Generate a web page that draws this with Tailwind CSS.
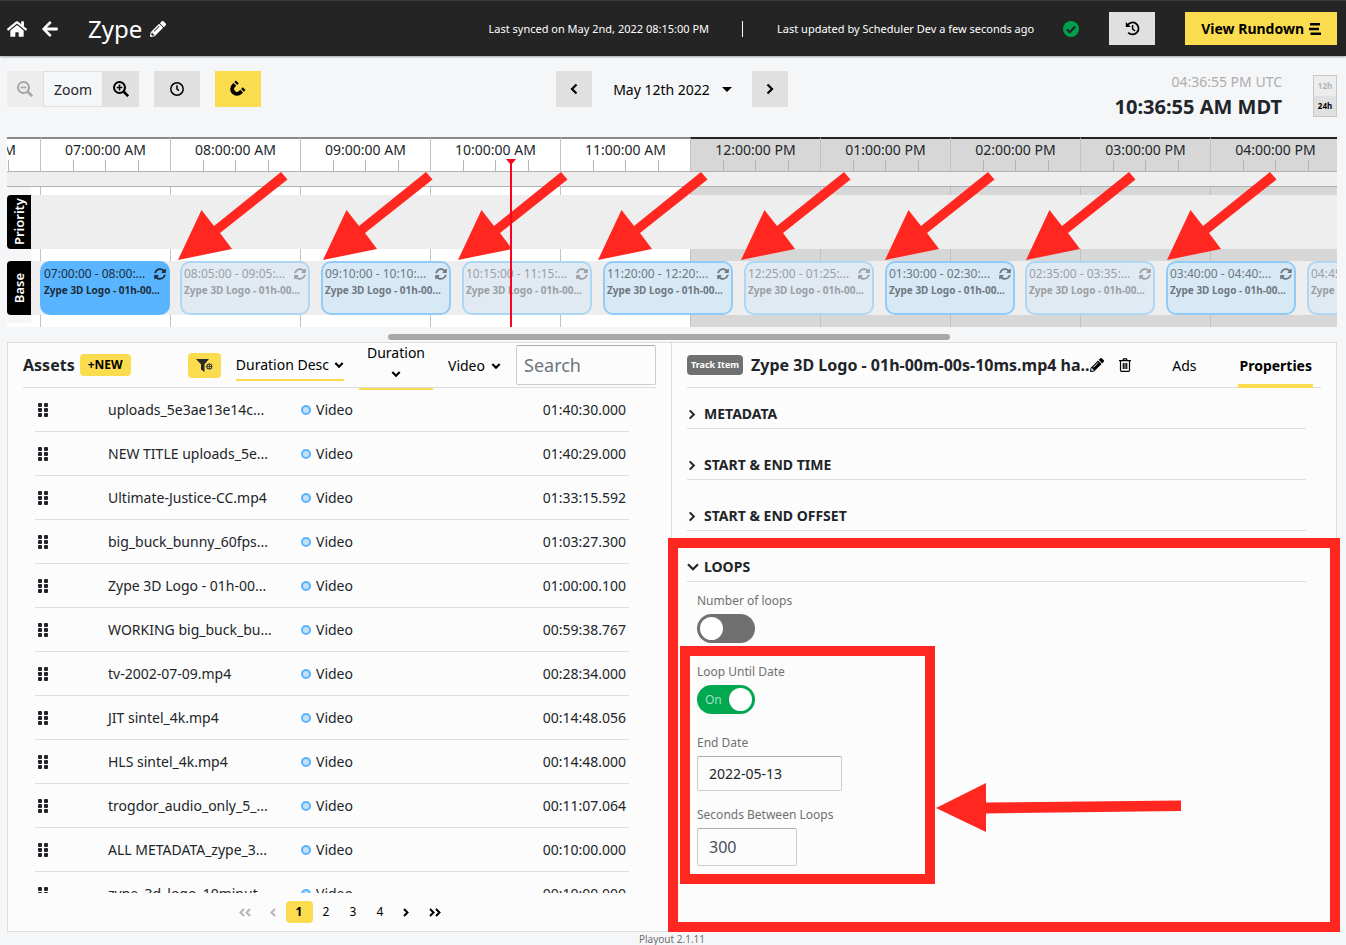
<!DOCTYPE html>
<html lang="en">
<head>
<meta charset="utf-8">
<title>Zype Playout</title>
<script src="https://cdn.jsdelivr.net/npm/@tailwindcss/browser@4"></script>
</head>
<body class="relative flex min-h-screen flex-col overflow-x-hidden bg-[#f5f6f8] font-['Noto_Sans',sans-serif] text-sm text-[#212529]">

<svg class="hidden" aria-hidden="true">
  <symbol id="home" viewBox="0 0 576 512"><path d="M280.37 148.26L96 300.11V464a16 16 0 0 0 16 16l112.06-.29a16 16 0 0 0 15.92-16V368a16 16 0 0 1 16-16h64a16 16 0 0 1 16 16v95.64a16 16 0 0 0 16 16.05L464 480a16 16 0 0 0 16-16V300L295.67 148.26a12.19 12.19 0 0 0-15.3 0zM571.6 251.47L488 182.56V44.05a12 12 0 0 0-12-12h-56a12 12 0 0 0-12 12v72.61L318.47 43a48 48 0 0 0-61 0L4.34 251.47a12 12 0 0 0-1.6 16.9l25.5 31A12 12 0 0 0 45.15 301l235.22-193.74a12.19 12.19 0 0 1 15.3 0L530.9 301a12 12 0 0 0 16.9-1.6l25.5-31a12 12 0 0 0-1.7-16.93z"/></symbol>
  <symbol id="back" viewBox="0 0 448 512"><path d="M257.5 445.1l-22.2 22.2c-9.4 9.4-24.6 9.4-33.9 0L7 273c-9.4-9.4-9.4-24.6 0-33.9L201.4 44.7c9.4-9.4 24.6-9.4 33.9 0l22.2 22.2c9.5 9.5 9.3 25-.4 34.3L136.6 216H424c13.3 0 24 10.7 24 24v32c0 13.3-10.7 24-24 24H136.6l120.5 114.8c9.8 9.3 10 24.8.4 34.3z"/></symbol>
  <symbol id="pencil" viewBox="0 0 512 512"><path d="M497.9 142.1l-46.1 46.1c-4.7 4.7-12.3 4.7-17 0l-111-111c-4.7-4.7-4.7-12.3 0-17l46.1-46.1c18.7-18.7 49.1-18.7 67.9 0l60.1 60.1c18.8 18.7 18.8 49.1 0 67.9zM284.2 99.8L21.6 362.4.4 483.9c-2.9 16.4 11.4 30.6 27.8 27.8l121.5-21.3 262.6-262.6c4.7-4.7 4.7-12.3 0-17l-111-111c-4.8-4.7-12.4-4.7-17.1 0zM124.1 339.9c-5.5-5.5-5.5-14.3 0-19.8l154-154c5.5-5.5 14.3-5.5 19.8 0s5.5 14.3 0 19.8l-154 154c-5.5 5.5-14.3 5.5-19.8 0zM88 424h48v36.3l-64.5 11.3-31.1-31.1L51.7 376H88v48z"/></symbol>
  <symbol id="sync" viewBox="0 0 512 512"><path d="M370.72 133.28C339.458 104.008 298.888 87.962 255.848 88c-77.458.068-144.328 53.178-162.791 126.85-1.344 5.363-6.122 9.15-11.651 9.15H24.103c-7.498 0-13.194-6.807-11.807-14.176C33.933 94.924 134.813 8 256 8c66.448 0 126.791 26.136 171.315 68.685L463.03 40.97C478.149 25.851 504 36.559 504 57.941V192c0 13.255-10.745 24-24 24H345.941c-21.382 0-32.09-25.851-16.971-40.971l41.75-41.749zM32 296h134.059c21.382 0 32.09 25.851 16.971 40.971l-41.75 41.75c31.262 29.273 71.835 45.319 114.876 45.28 77.418-.07 144.315-53.144 162.787-126.849 1.344-5.363 6.122-9.15 11.651-9.15h57.304c7.498 0 13.194 6.807 11.807 14.176C478.067 417.076 377.187 504 256 504c-66.448 0-126.791-26.136-171.315-68.685L48.97 471.03C33.851 486.149 8 475.441 8 454.059V320c0-13.255 10.745-24 24-24z"/></symbol>
  <symbol id="chev" viewBox="0 0 10 10"><path d="M1.3 3 5 6.700 8.700 3" fill="none" stroke="currentColor" stroke-width="2.200"/></symbol>
  <symbol id="angle" viewBox="0 0 8 12"><path d="M1.500 1.500 6 6 1.500 10.500" fill="none" stroke="currentColor" stroke-width="2.200"/></symbol>
  <symbol id="angle-bold" viewBox="0 0 6 9"><path d="M1 1 4.500 4.500 1 8" fill="none" stroke="currentColor" stroke-width="2"/></symbol>
</svg>

<header class="flex h-14 shrink-0 items-center border-t border-[#36373f] bg-[#242424] pr-[9px] pl-[7px] text-white shadow-[0_1px_2px_rgba(0,0,0,0.35)]">
  <a href="#" aria-label="Home"><svg class="h-[18px] w-5 fill-current"><use href="#home"/></svg></a>
  <a href="#" aria-label="Back" class="ml-[15px]"><svg class="h-[18px] w-4 fill-current"><use href="#back"/></svg></a>
  <h1 class="ml-[30px] text-2xl">Zype</h1>
  <button aria-label="Rename channel" class="ml-2"><svg class="size-4 fill-current"><use href="#pencil"/></svg></button>
  <div class="ml-auto flex items-center text-[11px]">
    <span>Last synced on May 2nd, 2022 08:15:00 PM</span>
    <span class="ml-[33px] h-4 w-px bg-white"></span>
    <span class="ml-[34px]">Last updated by Scheduler Dev a few seconds ago</span>
    <svg class="ml-[29px] size-4" viewBox="0 0 16 16"><circle cx="8" cy="8" r="8" fill="#009f4b"/><path d="M3.800 8.200 6.800 11.200 12.200 5.600" fill="none" stroke="#242424" stroke-width="2.200"/></svg>
  </div>
  <button aria-label="History" class="ml-[30px] flex h-[33px] w-[46px] items-center justify-center bg-[#e0e0e0] text-black">
    <svg class="size-[15px]" viewBox="0 0 15 15" fill="none" stroke="currentColor" stroke-width="1.800"><path d="M2.500 4.200A6 6 0 1 1 3.200 11.600"/><path d="M.8 1v5h5z" fill="currentColor" stroke="none"/><path d="M7.600 4v4l2.400 1.900" stroke-width="1.500"/></svg>
  </button>
  <button class="ml-[30px] flex h-[33px] items-center gap-[5px] bg-[#fcdc4f] px-4 font-bold text-black">View Rundown
    <svg class="h-3 w-3" viewBox="0 0 12 12"><path d="M1 0h10v2.400H1zM0 4.800h10v2.400H0zM1.500 9.600H12V12H1.500z"/></svg>
  </button>
</header>

<section aria-label="Toolbar" class="grid h-[81px] shrink-0 grid-cols-[1fr_auto_1fr] items-start pr-[9px] pl-[7px] pt-[15px] text-black">
  <div class="flex h-9">
    <button aria-label="Zoom out" disabled class="flex w-9 items-center justify-center bg-[#ededee] text-[#a6a6a8]">
      <svg class="size-4" viewBox="0 0 16 16" fill="none" stroke="currentColor" stroke-width="2"><circle cx="6.500" cy="6.500" r="5.500"/><path d="m10.500 10.500 4.700 4.700" stroke-width="2.600"/><path d="M3.600 6.500h5.800" stroke-width="1.600"/></svg>
    </button>
    <span class="flex w-[60px] items-center justify-center border border-[#e0e0e0] pt-[2px] text-[#212529]">Zoom</span>
    <button aria-label="Zoom in" class="flex w-9 items-center justify-center bg-[#e0e0e0]">
      <svg class="size-4" viewBox="0 0 16 16" fill="none" stroke="currentColor" stroke-width="2"><circle cx="6.500" cy="6.500" r="5.500"/><path d="m10.500 10.500 4.700 4.700" stroke-width="2.600"/><path d="M3.600 6.500h5.800M6.500 3.600v5.800" stroke-width="1.600"/></svg>
    </button>
    <button aria-label="Go to now" class="ml-[15px] flex w-[46px] items-center justify-center bg-[#e0e0e0]">
      <svg class="size-[14px]" viewBox="0 0 14 14" fill="none" stroke="currentColor" stroke-width="1.500"><circle cx="7" cy="7" r="6.200"/><path d="M7 3.200V7.200L9 8.600"/></svg>
    </button>
    <button aria-label="Snap" class="ml-[15px] flex w-[46px] items-center justify-center bg-[#fcdc4f]">
      <svg class="mb-[2px] size-4" viewBox="0 0 16 16" fill="none" stroke="currentColor" stroke-width="4"><path d="M4.800 4.400 3.600 5.600A4.800 4.800 0 0 0 10.400 12.400L11.600 11.200M5.700 3.500 7.300 1.900M12.500 10.300 14.100 8.700"/></svg>
    </button>
  </div>
  <div class="flex h-9 items-center">
    <button aria-label="Previous day" class="flex size-9 items-center justify-center bg-[#e0e0e0]"><svg class="h-3 w-2 rotate-180"><use href="#angle"/></svg></button>
    <button class="mr-5 ml-[21px] flex items-center gap-3 pt-[2px]" aria-haspopup="dialog">May 12th 2022 <svg class="mb-[2px] h-[5px] w-[10px]" viewBox="0 0 10 5"><path d="M0 0h10L5 5z"/></svg></button>
    <button aria-label="Next day" class="flex size-9 items-center justify-center bg-[#e0e0e0]"><svg class="h-3 w-2"><use href="#angle"/></svg></button>
  </div>
  <div class="flex justify-end gap-[31px]">
    <div class="text-right">
      <div class="leading-[22px] text-[#adadad]">04:36:55 PM UTC</div>
      <div class="text-xl leading-7 font-bold text-[#212529]">10:36:55 AM MDT</div>
    </div>
    <div class="mt-1 flex h-[42px] w-6 flex-col border border-[#c8c8c8] text-[8px] font-bold">
      <button class="flex-1 bg-[#ededee] text-[#b3b3b3]">12h</button>
      <button class="flex-1 bg-[#e0e0e0]">24h</button>
    </div>
  </div>
</section>

<section aria-label="Timeline" class="relative mr-[9px] ml-[7px] h-[190px] shrink-0">
  <div id="hours" class="absolute inset-0 flex overflow-hidden"></div>
  <div class="absolute inset-x-0 top-[34px] h-4 border-y border-[#b0b0b0] bg-[#eee]"></div>
  <div class="absolute top-[50px] left-0 h-[136px] w-6 bg-[#f5f6f8]"></div>
  <div class="absolute inset-x-0 top-[58px] flex h-[54px] bg-[#eee]">
    <div class="flex w-6 items-center justify-center rounded-l bg-black text-[13px] font-semibold text-white"><span class="rotate-180 [writing-mode:vertical-rl]">Priority</span></div>
  </div>
  <div class="absolute inset-x-0 top-[124px] flex h-[54px] overflow-hidden bg-[#eee]">
    <div class="flex w-6 items-center justify-center rounded-l bg-black text-[13px] font-semibold text-white"><span class="rotate-180 [writing-mode:vertical-rl]">Base</span></div>
    <div id="clips" class="relative ml-[9px] flex-1"></div>
  </div>
  <svg id="arrows" class="pointer-events-none absolute top-[34px] left-0 h-[92px] w-full overflow-visible fill-[#ff2720]" aria-hidden="true">
    <symbol id="arrow" viewBox="0 0 110 90"><path d="M0 89 23.500 39 36 55 103 1 109.500 8.500 42 62 54 78z"/></symbol>
  </svg>
  <div class="absolute top-[22px] left-[499px] flex h-[168px] w-[10px] flex-col items-center">
    <svg class="h-[6px] w-[10px] shrink-0 fill-[#ff0020]" viewBox="0 0 10 6"><path d="M0 0h10L5 6z"/></svg>
    <div class="-mt-1 w-[2px] flex-1 bg-[#ff0020]"></div>
  </div>
</section>
<div class="mr-[9px] ml-[7px] flex h-[15px] shrink-0 items-end pb-[2px]"><div class="ml-[381px] h-[6px] w-[562px] rounded-full bg-[#a8a8a8]"></div></div>

<main class="mr-[9px] ml-[7px] grid flex-1 grid-cols-2 border border-[#ddd] bg-[#fcfcfc]">
  <section aria-label="Assets" class="flex flex-col pr-px">
    <div class="mx-[15px] flex h-[45px] items-center border-b border-[#ddd] text-black">
      <h2 class="text-base font-bold text-[#212529]">Assets</h2>
      <button class="ml-[5px] h-[22px] rounded bg-[#fcdc4f] px-2 text-xs font-bold">+NEW</button>
      <button aria-label="Filters" class="ml-auto flex h-[25px] w-[33px] items-center justify-center rounded bg-[#fcdc4f]">
        <svg class="h-[13px] w-[17px]" viewBox="0 0 17 13" fill="#2a2a2a"><path d="M0 0h13L8.500 5.200V13L5 10.500V5.200z"/><circle cx="13.300" cy="7.500" r="3.600" stroke="#fcdc4f" stroke-width="1"/><circle cx="13.300" cy="7.500" r="2" fill="#fcdc4f"/><path d="M11 7.500h4.600M13.300 5.200v4.600" stroke="#2a2a2a" stroke-width=".8"/></svg>
      </button>
      <label class="ml-[15px] flex h-[31px] items-center gap-[5px] border-b-2 border-[#fcdc4f] pt-[2px]"><select aria-label="Sort" class="appearance-none [field-sizing:content]"><option>Duration Desc</option></select><svg class="size-[10px]"><use href="#chev"/></svg></label>
      <label class="-mb-px ml-[15px] flex h-[48px] w-[74px] flex-col items-center border-b-2 border-[#fcdc4f] pt-px"><select aria-label="Filter by duration" class="appearance-none [field-sizing:content]"><option>Duration</option></select><svg class="mt-[6px] size-[10px]"><use href="#chev"/></svg></label>
      <label class="ml-[15px] flex items-center gap-[6px] pt-[2px]"><select aria-label="Asset type" class="appearance-none [field-sizing:content]"><option>Video</option></select><svg class="size-[10px]"><use href="#chev"/></svg></label>
      <input type="search" aria-label="Search assets" placeholder="Search" class="ml-[15px] h-10 w-[140px] rounded-[2px] border border-[#ccc] border-t-[#aaa] bg-transparent px-[7px] text-lg placeholder:text-[#6c757d]">
    </div>
    <div class="mr-[42px] ml-[27px] h-[505px] overflow-hidden">
      <table class="w-full table-fixed border-separate border-spacing-0">
        <colgroup><col class="w-[73px]"><col class="w-[193px]"><col><col class="w-[120px]"></colgroup>
        <tbody id="assets"></tbody>
      </table>
    </div>
    <nav aria-label="Pages" class="mt-2 flex h-[22px] items-center justify-center text-xs text-black">
      <button aria-label="First page" disabled class="mr-[19px] flex text-[#b5b5b5]"><svg class="h-[9px] w-[6px] rotate-180"><use href="#angle-bold"/></svg><svg class="h-[9px] w-[6px] rotate-180"><use href="#angle-bold"/></svg></button>
      <button aria-label="Previous page" disabled class="mr-[10px] text-[#b5b5b5]"><svg class="h-[9px] w-[6px] rotate-180"><use href="#angle-bold"/></svg></button>
      <button aria-current="page" class="h-[22px] w-[27px] rounded bg-[#fcdc4f] font-bold">1</button>
      <button class="w-[27px]">2</button>
      <button class="w-[27px]">3</button>
      <button class="w-[27px]">4</button>
      <button aria-label="Next page" class="ml-[9px]"><svg class="h-[9px] w-[6px]"><use href="#angle-bold"/></svg></button>
      <button aria-label="Last page" class="ml-5 flex"><svg class="h-[9px] w-[6px]"><use href="#angle-bold"/></svg><svg class="h-[9px] w-[6px]"><use href="#angle-bold"/></svg></button>
    </nav>
  </section>

  <section aria-label="Track item" class="-ml-px flex min-w-0 flex-col border-l border-[#ddd] pl-[15px]">
    <div class="mr-[15px] flex h-[45px] items-center border-b border-[#ddd]">
      <span class="flex h-5 items-center rounded bg-[#707070] px-1 text-[9px] font-bold text-white">Track Item</span>
      <h2 class="ml-2 text-base font-bold whitespace-nowrap">Zype 3D Logo - 01h-00m-00s-10ms.mp4 ha..</h2>
      <button aria-label="Edit title"><svg class="size-[14px] fill-black"><use href="#pencil"/></svg></button>
      <button aria-label="Delete" class="ml-[15px]"><svg class="h-[14px] w-3" viewBox="0 0 12 14" fill="none" stroke="#000" stroke-width="1.200"><path d="M0 2.700h12M3.800 2.700 4.500.8h3l.7 1.900M1.500 3v9.200q0 1.100 1 1.100h7q1 0 1-1.100V3M4.300 5v6M6 5v6M7.700 5v6"/></svg></button>
      <nav class="ml-auto flex h-full items-center text-black">
        <a href="#" class="mr-[42px] pt-[2px]">Ads</a>
        <a href="#" aria-current="page" class="mr-2 -mb-px flex h-[45px] items-center border-b-4 border-[#fcdc4f] px-px pt-1 font-bold">Properties</a>
      </nav>
    </div>
    <div class="mr-[30px] font-bold">
      <button class="flex h-[41px] w-full items-end gap-2 border-b border-[#ddd] px-px pb-1"><svg class="mb-1 h-[11px] w-2"><use href="#angle"/></svg>METADATA</button>
      <button class="flex h-[51px] w-full items-end gap-2 border-b border-[#ddd] px-px pb-1"><svg class="mb-1 h-[11px] w-2"><use href="#angle"/></svg>START &amp; END TIME</button>
      <button class="flex h-[51px] w-full items-end gap-2 border-b border-[#ddd] px-px pb-1"><svg class="mb-1 h-[11px] w-2"><use href="#angle"/></svg>START &amp; END OFFSET</button>
    </div>
    <div class="relative flex-1 pr-[30px]">
      <div class="pointer-events-none absolute -right-1 -bottom-px top-[7px] -left-[19px] border-[10px] border-[#ff2720]"></div>
      <button class="flex h-[51px] w-full items-end gap-[5px] border-b border-[#ddd] pb-1 font-bold"><svg class="mb-[6px] h-2 w-3" viewBox="0 0 12 8" fill="none" stroke="currentColor" stroke-width="2.200"><path d="M1 1.200 6 6.200 11 1.200"/></svg>LOOPS</button>
      <div class="relative pt-[10px] pl-[10px] text-xs text-[#707070]">
        <div class="pointer-events-none absolute top-16 -left-[7px] h-[238px] w-[255px] border-[10px] border-[#ff2720]"></div>
        <svg class="pointer-events-none absolute top-[201px] left-[249px] h-[50px] w-[246px] fill-[#ff2720]" viewBox="0 0 246 50" aria-hidden="true"><path d="M0 25 50 0V19.500L245 17.500V28L50 30.500V49z"/></svg>
        <label class="flex w-fit flex-col items-start gap-1">
          <span class="leading-[18px]">Number of loops</span>
          <input type="checkbox" role="switch" class="peer sr-only">
          <span class="flex h-[29px] w-[58px] items-center rounded-full bg-[#707070] p-[3px]"><span class="size-[23px] rounded-full bg-white"></span></span>
        </label>
        <label class="mt-5 flex w-fit flex-col items-start gap-1">
          <span class="leading-[18px]">Loop Until Date</span>
          <input type="checkbox" role="switch" checked class="peer sr-only">
          <span class="flex h-[29px] w-[58px] items-center justify-between rounded-full bg-[#00a84f] p-[3px] pl-2 text-[#a5dfc0]">On<span class="size-[23px] rounded-full bg-white"></span></span>
        </label>
        <label class="mt-5 flex w-fit flex-col items-start gap-1">
          <span class="leading-[18px]">End Date</span>
          <input type="text" value="2022-05-13" class="h-[35px] w-[145px] rounded-[2px] border border-[#ccc] border-t-[#aaa] bg-transparent px-[11px] text-sm text-[#212529]">
        </label>
        <label class="mt-[15px] flex w-fit flex-col items-start gap-1">
          <span class="leading-[18px]">Seconds Between Loops</span>
          <input type="number" value="300" class="h-[38px] w-[100px] rounded-[2px] border border-[#ccc] border-t-[#aaa] bg-transparent px-[11px] text-base text-[#495057]">
        </label>
      </div>
    </div>
  </section>
</main>
<footer class="h-[13px] shrink-0 pr-[2px] text-center text-[10px] leading-[15px] text-[#707070]">Playout 2.1.11</footer>

<script>
const hours = ['06:00:00 AM','07:00:00 AM','08:00:00 AM','09:00:00 AM','10:00:00 AM','11:00:00 AM','12:00:00 PM','01:00:00 PM','02:00:00 PM','03:00:00 PM','04:00:00 PM'];
document.getElementById('hours').innerHTML = hours.map((h, i) => `
  <div class="${i ? '' : '-ml-[97px]'} ${i > 5 ? 'bg-[#d7d7d7] border-t-[#212529]' : 'bg-white border-t-[#888]'} w-[130px] shrink-0 border-t-2 border-l border-l-[#c2c2c2] text-center leading-[22px]">
    ${h}
    <div class="-mt-px flex h-[11px] justify-evenly"><i class="w-px bg-[#b4b4b4]"></i><i class="w-px bg-[#b4b4b4]"></i><i class="w-px bg-[#b4b4b4]"></i></div>
  </div>`).join('');

// Each clip lasts an hour and is followed by a five minute gap; one minute is 130/60 px.
const clips = ['07:00:00 - 08:00:...','08:05:00 - 09:05:...','09:10:00 - 10:10:...','10:15:00 - 11:15:...','11:20:00 - 12:20:...','12:25:00 - 01:25:...','01:30:00 - 02:30:...','02:35:00 - 03:35:...','03:40:00 - 04:40:...','04:45:00 - 05:45:...'];
document.getElementById('clips').innerHTML = clips.map((t, i) => {
  const tone = i === 0 ? 'bg-[#59b5ff] border-[#59b5ff] text-[#1c2c3a]'
    : i % 2 ? 'bg-[#e1eaf2] border-[#acd7f7] text-[#9b9fa3]'
    : 'bg-[#d8e9f6] border-[#92cbf7] text-[#6f7780]';
  return `<div class="${tone} absolute inset-y-0 w-[130px] rounded-[10px] border-2 px-[2px] pt-[2px] whitespace-nowrap" style="left:${Math.floor(i * 65 * 130 / 60)}px">
    <div class="flex items-center justify-between text-xs leading-[18px]"><span>${t}</span><svg class="size-3 fill-current"><use href="#sync"/></svg></div>
    <div class="text-[10px] leading-[14px] font-bold">Zype 3D Logo - 01h-00...</div>
  </div>`;
}).join('');

document.getElementById('arrows').insertAdjacentHTML('beforeend',
  [171, 316, 451, 591, 734, 878, 1019, 1160].map(x => `<use href="#arrow" x="${x}" y="0" width="110" height="90"/>`).join(''));

const assets = [
  ['uploads_5e3ae13e14c...','01:40:30.000'],['NEW TITLE uploads_5e...','01:40:29.000'],['Ultimate-Justice-CC.mp4','01:33:15.592'],
  ['big_buck_bunny_60fps...','01:03:27.300'],['Zype 3D Logo - 01h-00...','01:00:00.100'],['WORKING big_buck_bu...','00:59:38.767'],
  ['tv-2002-07-09.mp4','00:28:34.000'],['JIT sintel_4k.mp4','00:14:48.056'],['HLS sintel_4k.mp4','00:14:48.000'],
  ['trogdor_audio_only_5_...','00:11:07.064'],['ALL METADATA_zype_3...','00:10:00.000'],['zype_3d_logo_10minut...','00:10:00.000']];
document.getElementById('assets').innerHTML = assets.map(([n, d]) => `
  <tr class="h-[44px]">
    <td class="border-b border-[#ddd] pl-[3px]"><svg class="h-[14px] w-[11px]" viewBox="0 0 11 14"><path d="M0 1q0-1 1-1h2q1 0 1 1v2q0 1-1 1H1Q0 4 0 3zM6 1q0-1 1-1h2q1 0 1 1v2q0 1-1 1H7Q6 4 6 3zM0 6q0-1 1-1h2q1 0 1 1v2q0 1-1 1H1Q0 9 0 8zM6 6q0-1 1-1h2q1 0 1 1v2q0 1-1 1H7Q6 9 6 8zM0 11q0-1 1-1h2q1 0 1 1v2q0 1-1 1H1q-1 0-1-1zM6 11q0-1 1-1h2q1 0 1 1v2q0 1-1 1H7q-1 0-1-1z" fill="#212529"/></svg></td>
    <td class="border-b border-[#ddd] whitespace-nowrap">${n}</td>
    <td class="border-b border-[#ddd]"><span class="flex items-center gap-[5px]"><i class="size-[10px] rounded-full border-2 border-[#59b5ff] bg-[#c3e1fb]"></i>Video</span></td>
    <td class="border-b border-[#ddd] pr-[3px] text-right">${d}</td>
  </tr>`).join('');
</script>
</body>
</html>
